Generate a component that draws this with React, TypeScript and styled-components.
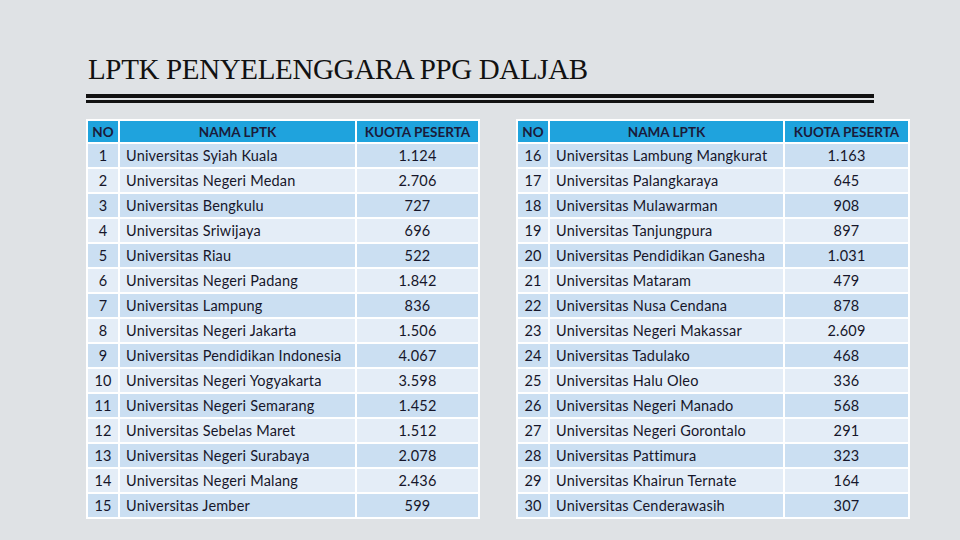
import React from 'react';
import styled, { createGlobalStyle } from 'styled-components';

type Row = { no: number; name: string; quota: string };

const left: Row[] = [
  { no: 1, name: 'Universitas Syiah Kuala', quota: '1.124' },
  { no: 2, name: 'Universitas Negeri Medan', quota: '2.706' },
  { no: 3, name: 'Universitas Bengkulu', quota: '727' },
  { no: 4, name: 'Universitas Sriwijaya', quota: '696' },
  { no: 5, name: 'Universitas Riau', quota: '522' },
  { no: 6, name: 'Universitas Negeri Padang', quota: '1.842' },
  { no: 7, name: 'Universitas Lampung', quota: '836' },
  { no: 8, name: 'Universitas Negeri Jakarta', quota: '1.506' },
  { no: 9, name: 'Universitas Pendidikan Indonesia', quota: '4.067' },
  { no: 10, name: 'Universitas Negeri Yogyakarta', quota: '3.598' },
  { no: 11, name: 'Universitas Negeri Semarang', quota: '1.452' },
  { no: 12, name: 'Universitas Sebelas Maret', quota: '1.512' },
  { no: 13, name: 'Universitas Negeri Surabaya', quota: '2.078' },
  { no: 14, name: 'Universitas Negeri Malang', quota: '2.436' },
  { no: 15, name: 'Universitas Jember', quota: '599' },
];

const right: Row[] = [
  { no: 16, name: 'Universitas Lambung Mangkurat', quota: '1.163' },
  { no: 17, name: 'Universitas Palangkaraya', quota: '645' },
  { no: 18, name: 'Universitas Mulawarman', quota: '908' },
  { no: 19, name: 'Universitas Tanjungpura', quota: '897' },
  { no: 20, name: 'Universitas Pendidikan Ganesha', quota: '1.031' },
  { no: 21, name: 'Universitas Mataram', quota: '479' },
  { no: 22, name: 'Universitas Nusa Cendana', quota: '878' },
  { no: 23, name: 'Universitas Negeri Makassar', quota: '2.609' },
  { no: 24, name: 'Universitas Tadulako', quota: '468' },
  { no: 25, name: 'Universitas Halu Oleo', quota: '336' },
  { no: 26, name: 'Universitas Negeri Manado', quota: '568' },
  { no: 27, name: 'Universitas Negeri Gorontalo', quota: '291' },
  { no: 28, name: 'Universitas Pattimura', quota: '323' },
  { no: 29, name: 'Universitas Khairun Ternate', quota: '164' },
  { no: 30, name: 'Universitas Cenderawasih', quota: '307' },
];

const GlobalStyle = createGlobalStyle`
  html, body {
    margin: 0;
    padding: 0;
    background: #dfe2e5;
  }
`;

const Slide = styled.div`
  width: 960px;
  height: 540px;
  box-sizing: border-box;
  padding: 53px 0 0 86px;
  background: #dfe2e5;
  overflow: hidden;
`;

const Title = styled.h1`
  margin: 0 0 0 2px;
  font-family: 'Liberation Serif', 'Times New Roman', serif;
  font-weight: 400;
  font-size: 29px;
  line-height: 32px;
  color: #111;
  letter-spacing: -0.35px;
`;

const Rule = styled.div`
  width: 788px;
  margin-top: 9px;
  border-top: 4px solid #111;
  height: 2px;
  border-bottom: 3px solid #111;
`;

const Tables = styled.div`
  display: flex;
  gap: 36px;
  margin-top: 16px;
`;

const Table = styled.table`
  width: 394px;
  border-collapse: collapse;
  table-layout: fixed;
  font-family: Lato, 'Noto Sans', sans-serif;
  font-size: 14.5px;
  color: #16162a;
  border: 2px solid #fff;
`;

const HeadCell = styled.th<{ $w?: number }>`
  ${(p) => (p.$w ? `width: ${p.$w}px;` : '')}
  height: 21px;
  padding: 0;
  background: #1fa3dd;
  border: 2px solid #fff;
  font-weight: 700;
  font-size: 13.5px;
  color: #1b1b3a;
  text-align: center;
  white-space: nowrap;
`;

const BodyRow = styled.tr<{ $odd: boolean }>`
  background: ${(p) => (p.$odd ? '#cbdff2' : '#e4edf7')};
`;

const Cell = styled.td<{ $align?: 'left' | 'center' }>`
  height: 23px;
  padding: 0 0 0 ${(p) => (p.$align === 'left' ? '6px' : '0')};
  border: 2px solid #fff;
  text-align: ${(p) => p.$align ?? 'center'};
  white-space: nowrap;
  overflow: hidden;
  letter-spacing: 0.2px;
`;

const QuotaTable = ({ rows, nameWidth }: { rows: Row[]; nameWidth: number }) => (
  <Table>
    <thead>
      <tr>
        <HeadCell $w={30}>NO</HeadCell>
        <HeadCell $w={nameWidth}>NAMA LPTK</HeadCell>
        <HeadCell>KUOTA PESERTA</HeadCell>
      </tr>
    </thead>
    <tbody>
      {rows.map((r, i) => (
        <BodyRow key={r.no} $odd={i % 2 === 0}>
          <Cell>{r.no}</Cell>
          <Cell $align="left">{r.name}</Cell>
          <Cell>{r.quota}</Cell>
        </BodyRow>
      ))}
    </tbody>
  </Table>
);

export default function App() {
  return (
    <>
      <GlobalStyle />
      <Slide>
        <Title>LPTK PENYELENGGARA PPG DALJAB</Title>
        <Rule />
        <Tables>
          <QuotaTable rows={left} nameWidth={235} />
          <QuotaTable rows={right} nameWidth={233} />
        </Tables>
      </Slide>
    </>
  );
}
